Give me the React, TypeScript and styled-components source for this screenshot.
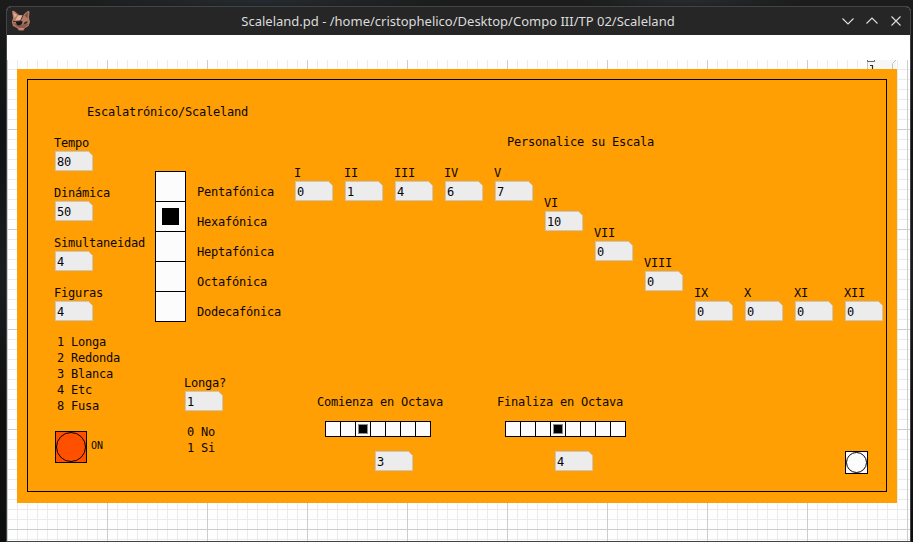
import React from 'react';
import styled, { createGlobalStyle } from 'styled-components';

const Global = createGlobalStyle`
  *, *::before, *::after { box-sizing: border-box; }
  body { margin: 0; background: #151616; overflow: hidden; }
`;

const Desktop = styled.div`
  width: 913px;
  height: 542px;
  padding: 6px 2px 0 6px;
  background:
    radial-gradient(ellipse 200px 14px at 260px 0, #252b30, transparent),
    radial-gradient(ellipse 120px 12px at 690px 0, #272c2e, transparent),
    linear-gradient(180deg, #1b1c1b 0%, #101112 25%, #1a1d20 50%, #10110f 75%, #0d0f0e 100%);
`;

const Window = styled.section`
  display: flex;
  flex-direction: column;
  height: 536px;
  border: 1px solid #434446;
  border-radius: 5px 5px 0 0;
  background: #fff;
  overflow: hidden;
`;

const TitleBar = styled.header`
  display: grid;
  grid-template-columns: 100px 1fr 100px;
  align-items: center;
  flex: none;
  height: 28px;
  background: #262626;
`;

const AppIcon = styled.svg`
  display: block;
  width: 20px;
  height: 22px;
  margin-left: 4px;
`;

const Title = styled.h1`
  margin: 0 0 0 -1px;
  text-align: center;
  white-space: nowrap;
  color: #dcdcdc;
  font: 400 13px/18px 'Noto Sans', sans-serif;
`;

const WindowButtons = styled.div`
  display: flex;
  gap: 8px;
  justify-content: flex-end;
  padding-right: 6px;
`;

const ButtonIcon = styled.svg`
  display: block;
  width: 16px;
  height: 16px;
  fill: none;
  stroke: #dedede;
  stroke-width: 1.1;
`;

const MenuBar = styled.div`
  flex: none;
  height: 25px;
  background: #fff;
`;

const Canvas = styled.main`
  flex: 1;
  display: flex;
  flex-direction: column;
  align-items: flex-start;
  overflow: hidden;
  background:
    repeating-linear-gradient(90deg, #cdcdcd 0 1px, transparent 1px 100px),
    repeating-linear-gradient(180deg, #cdcdcd 0 1px, transparent 1px 100px) 0 -31px / 100% 700px,
    repeating-linear-gradient(90deg, #ebebeb 0 1px, transparent 1px 10px),
    repeating-linear-gradient(180deg, #ebebeb 0 1px, transparent 1px 10px) 0 -1px / 100% 700px,
    #fefefe;
`;

const HiddenPart = styled.svg`
  display: block;
  width: 30px;
  height: 9px;
  margin-left: 860px;
`;

// Graph-on-parent area: the patch objects are laid freely over it.
const Panel = styled.div`
  position: relative;
  flex: none;
  width: 880px;
  height: 434px;
  margin-left: 10px;
  padding: 10px 10px 11px;
  background: #ff9f04;
`;

const Frame = styled.div`
  height: 100%;
  border: 1px solid #000;
`;

const Node = styled.div<{ $x: number; $y: number }>`
  position: absolute;
  left: ${(p) => p.$x}px;
  top: ${(p) => p.$y}px;
  display: flex;
  flex-direction: column;
  align-items: flex-start;
`;

const Comment = styled.span<{ $small?: boolean }>`
  white-space: pre;
  color: #0a0600;
  font-family: 'DejaVu Sans Mono', monospace;
  font-size: ${(p) => (p.$small ? 10 : 12)}px;
  line-height: 16px;
  letter-spacing: ${(p) => (p.$small ? -0.02 : -0.224)}px;
`;

const NumberBox = styled.div`
  display: grid;
  width: 38px;
  height: 20px;
  margin-left: 1px;
`;

const NumberShape = styled.svg`
  grid-area: 1 / 1;
  display: block;
  width: 38px;
  height: 20px;
  fill: #ececec;
  stroke: #c6c6c6;
`;

const NumberValue = styled.span`
  grid-area: 1 / 1;
  padding: 3px 0 0 2px;
  color: #080408;
  font: 12px/16px 'DejaVu Sans Mono', monospace;
  letter-spacing: -0.224px;
`;

const Radio = styled.div<{ $vertical?: boolean }>`
  display: flex;
  flex-direction: ${(p) => (p.$vertical ? 'column' : 'row')};
  gap: 1px;
  padding: 1px;
  background: #000;
`;

const Cell = styled.div<{ $size: number }>`
  display: grid;
  place-items: center;
  width: ${(p) => p.$size}px;
  height: ${(p) => p.$size}px;
  background: #fcfcfc;
`;

const Knob = styled.div<{ $size: number; $soft?: boolean }>`
  width: ${(p) => p.$size}px;
  height: ${(p) => p.$size}px;
  background: #000;
  border: ${(p) => (p.$soft ? '1px solid #8c8c8c' : 'none')};
`;

const Bang = styled.svg<{ $size: number; $fill: string }>`
  display: block;
  width: ${(p) => p.$size}px;
  height: ${(p) => p.$size}px;
  fill: ${(p) => p.$fill};
  stroke: #000;
`;

const Num = ({ value }: { value: number }) => (
  <NumberBox>
    <NumberShape viewBox="0 0 38 20">
      <path d="M.5 .5H33.5L37.5 4.5V19.5H.5Z" />
    </NumberShape>
    <NumberValue>{value}</NumberValue>
  </NumberBox>
);

// Number boxes, each with the caption that stands over it.
const numbers = [
  { label: 'Tempo', x: 37, y: 66, value: 80 },
  { label: 'Dinámica', x: 37, y: 116, value: 50 },
  { label: 'Simultaneidad', x: 37, y: 166, value: 4 },
  { label: 'Figuras', x: 37, y: 216, value: 4 },
  { label: 'Longa?', x: 167, y: 306, value: 1 },
  { label: 'I', x: 277, y: 96, value: 0 },
  { label: 'II', x: 327, y: 96, value: 1 },
  { label: 'III', x: 377, y: 96, value: 4 },
  { label: 'IV', x: 427, y: 96, value: 6 },
  { label: 'V', x: 477, y: 96, value: 7 },
  { label: 'VI', x: 527, y: 126, value: 10 },
  { label: 'VII', x: 577, y: 156, value: 0 },
  { label: 'VIII', x: 627, y: 186, value: 0 },
  { label: 'IX', x: 677, y: 216, value: 0 },
  { label: 'X', x: 727, y: 216, value: 0 },
  { label: 'XI', x: 777, y: 216, value: 0 },
  { label: 'XII', x: 827, y: 216, value: 0 },
];

const comments = [
  { text: 'Escalatrónico/Scaleland', x: 70, y: 35 },
  { text: 'Personalice su Escala', x: 490, y: 65 },
  { text: '1 Longa\n2 Redonda\n3 Blanca\n4 Etc\n8 Fusa', x: 40, y: 265 },
  { text: '0 No\n1 Si', x: 170, y: 355 },
];

const scales = ['Pentafónica', 'Hexafónica', 'Heptafónica', 'Octafónica', 'Dodecafónica'];

const octaves = [
  { text: 'Comienza en Octava', x: 300, count: 7, value: 3 },
  { text: 'Finaliza en Octava', x: 480, count: 8, value: 4 },
];

const ScaleChooser = styled.div`
  display: flex;
  gap: 11px;
`;

const ScaleNames = styled.div`
  display: flex;
  flex-direction: column;
  gap: 14px;
  padding-top: 13px;
`;

const OctaveRadio = styled.div`
  padding: 11px 0 14px 8px;
`;

const OctaveNumber = styled.div`
  padding-left: 57px;
`;

const BangRow = styled.div`
  display: flex;
  align-items: center;
  gap: 4px;
`;

const BangLabel = styled.div`
  display: flex;
  margin-top: -2px;
`;

export default function App() {
  return (
    <Desktop>
      <Global />
      <Window>
        <TitleBar>
          <AppIcon viewBox="0 0 20 22">
            <path d="M1 1L3 .8L8 5H12L17 .8L18.500 1.500L18 8L19 12L17.500 16L14 18L12.500 20.500H8L6 18L2 16L.8 12L2 8Z" fill="#b57a64" />
            <path d="M2 2L6 5L3.500 8Z" fill="#e0aa90" />
            <path d="M17 2L13.500 5.500L16.500 8.500Z" fill="#7c5144" />
            <path d="M7 5.500H11.500L10.500 10L4 11Z" fill="#e6b497" />
            <path d="M1.500 13L5 16L8 18H13L18 14L14 13.500L10 15L7 14Z" fill="#8d5b4b" />
            <path d="M4.500 11.500L11.500 11L11 14L8.500 15.500L6 15Z" fill="#17191c" />
            <path d="M2 11.500L9.500 11L12.500 4" fill="none" stroke="#33251f" strokeWidth=".9" />
            <path d="M12.500 13L15 11.500L17 11.500L15.500 13.500L13 14Z" fill="#25292c" />
            <path d="M8 18H13L11.500 19.800H9Z" fill="#d17f88" />
          </AppIcon>
          <Title>Scaleland.pd - /home/cristophelico/Desktop/Compo III/TP 02/Scaleland</Title>
          <WindowButtons>
            <ButtonIcon viewBox="0 0 16 16"><path d="M2.500 5.500L8 11L13.500 5.500" /></ButtonIcon>
            <ButtonIcon viewBox="0 0 16 16"><path d="M2.500 10.500L8 5L13.500 10.500" /></ButtonIcon>
            <ButtonIcon viewBox="0 0 16 16"><path d="M3.500 3.500L12.500 12.500M12.500 3.500L3.500 12.500" /></ButtonIcon>
          </WindowButtons>
        </TitleBar>
        <MenuBar />
        <Canvas>
          <HiddenPart viewBox="0 0 30 9">
            <path d="M0 0H29V9H0Z" fill="#f6f6f4" />
            <path d="M.5 0V9M25.500 9V3.500L29 0" fill="none" stroke="#c4c4c4" />
            <path d="M.5 0V1.500H7.500V0" fill="none" stroke="#666" />
            <path d="M3 5.500H5.500V9" fill="none" stroke="#3a2420" strokeWidth="1.200" />
          </HiddenPart>
          <Panel>
            <Frame />
            {numbers.map((n) => (
              <Node key={n.label} $x={n.x} $y={n.y}>
                <Comment>{n.label}</Comment>
                <Num value={n.value} />
              </Node>
            ))}
            {comments.map((c) => (
              <Node key={c.text} $x={c.x} $y={c.y}>
                <Comment>{c.text}</Comment>
              </Node>
            ))}
            <Node $x={138} $y={102}>
              <ScaleChooser>
                <Radio $vertical>
                  {scales.map((s, i) => (
                    <Cell key={s} $size={29}>{i === 1 && <Knob $size={17} />}</Cell>
                  ))}
                </Radio>
                <ScaleNames>
                  {scales.map((s) => <Comment key={s}>{s}</Comment>)}
                </ScaleNames>
              </ScaleChooser>
            </Node>
            {octaves.map((o) => (
              <Node key={o.text} $x={o.x} $y={325}>
                <Comment>{o.text}</Comment>
                <OctaveRadio>
                  <Radio>
                    {Array.from({ length: o.count }, (_, i) => (
                      <Cell key={i} $size={14}>{i === o.value - 1 && <Knob $size={10} $soft />}</Cell>
                    ))}
                  </Radio>
                </OctaveRadio>
                <OctaveNumber><Num value={o.value} /></OctaveNumber>
              </Node>
            ))}
            <Node $x={38} $y={362}>
              <BangRow>
                <Bang $size={32} $fill="#ff5000" viewBox="0 0 32 32">
                  <rect x=".5" y=".5" width="31" height="31" />
                  <circle cx="16" cy="16" r="14.500" />
                </Bang>
                <BangLabel><Comment $small>ON</Comment></BangLabel>
              </BangRow>
            </Node>
            <Node $x={828} $y={382}>
              <Bang $size={23} $fill="#fcfcfc" viewBox="0 0 23 23">
                <rect x=".5" y=".5" width="22" height="22" />
                <circle cx="11.500" cy="11.500" r="10" />
              </Bang>
            </Node>
          </Panel>
        </Canvas>
      </Window>
    </Desktop>
  );
}
